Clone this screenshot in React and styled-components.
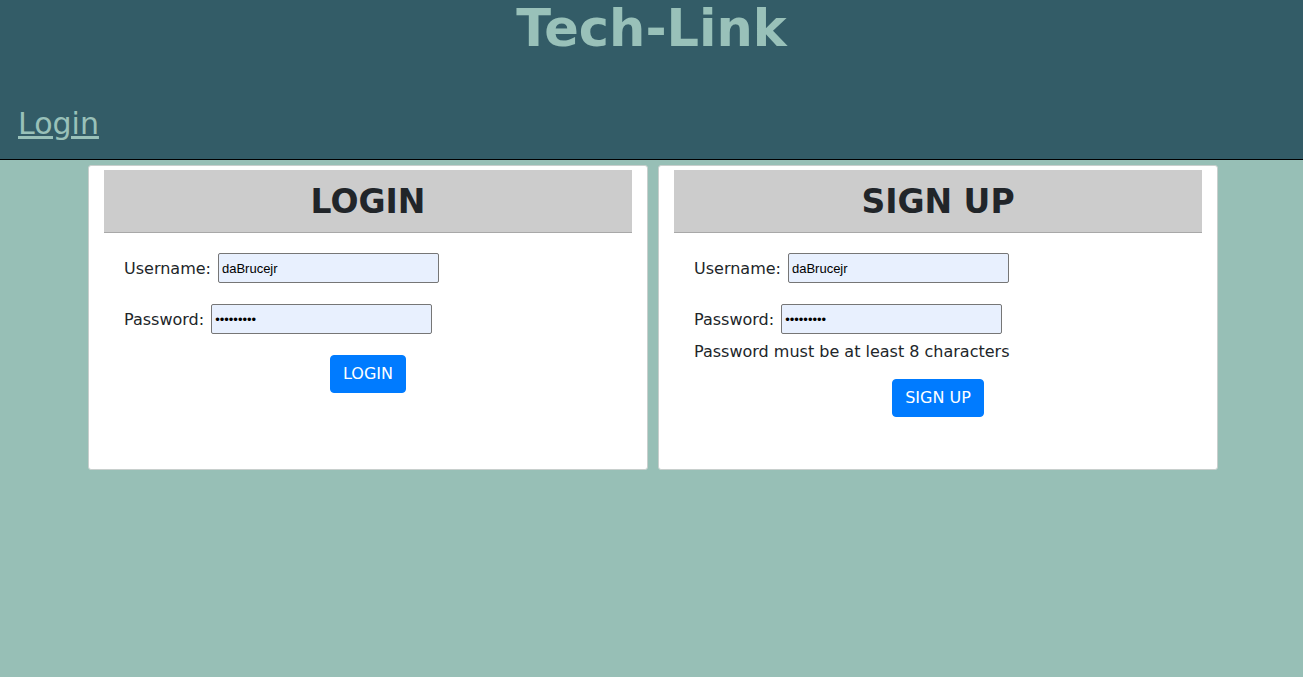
import React from 'react';
import styled, { createGlobalStyle } from 'styled-components';

const GlobalStyle = createGlobalStyle`
  html, body {
    margin: 0;
    padding: 0;
    background: #97bfb6;
    font-family: "DejaVu Sans", Verdana, sans-serif;
    color: #212529;
  }
  * {
    box-sizing: border-box;
  }
`;

export default function App() {
  return (
    <>
      <GlobalStyle />
      <Header>
        <SiteTitle>Tech-Link</SiteTitle>
        <Nav>
          <NavLink href="#">Login</NavLink>
        </Nav>
      </Header>

      <Main>
        <Card>
          <CardHeader>
            <CardTitle>LOGIN</CardTitle>
          </CardHeader>
          <Form>
            <Row>
              <Label>Username:</Label>
              <Input type="text" defaultValue="daBrucejr" />
            </Row>
            <Row>
              <Label>Password:</Label>
              <Input type="password" defaultValue="password1" />
            </Row>
            <ButtonRow $gap={21}>
              <Button type="button">LOGIN</Button>
            </ButtonRow>
          </Form>
        </Card>

        <Card>
          <CardHeader>
            <CardTitle>SIGN UP</CardTitle>
          </CardHeader>
          <Form>
            <Row>
              <Label>Username:</Label>
              <Input type="text" defaultValue="daBrucejr" />
            </Row>
            <Row>
              <Label>Password:</Label>
              <Input type="password" defaultValue="password1" />
            </Row>
            <Hint>Password must be at least 8 characters</Hint>
            <ButtonRow $gap={15}>
              <Button type="button">SIGN UP</Button>
            </ButtonRow>
          </Form>
        </Card>
      </Main>
    </>
  );
}

const Header = styled.header`
  height: 160px;
  background: #335c67;
  border-bottom: 1px solid #000;
  display: flex;
  flex-direction: column;
  padding-top: 1px;
`;

const SiteTitle = styled.h1`
  margin: 0;
  text-align: center;
  font-size: 51px;
  line-height: 56px;
  font-weight: bold;
  color: #99c1b9;
`;

const Nav = styled.nav`
  margin-top: 49px;
  padding-left: 18px;
`;

const NavLink = styled.a`
  font-size: 30px;
  line-height: 36px;
  color: #99c1b9;
  text-decoration: underline;
`;

const Main = styled.main`
  display: flex;
  justify-content: center;
  align-items: stretch;
  gap: 10px;
  margin-top: 5px;
  padding-left: 3px;
`;

const Card = styled.section`
  width: 560px;
  background: #fff;
  border: 1px solid #c8cfcd;
  border-radius: 3px;
  padding: 4px 15px 0;
`;

const CardHeader = styled.div`
  height: 63px;
  background: #cccccc;
  border-bottom: 1px solid #a8a8a8;
  display: flex;
  align-items: center;
  justify-content: center;
  padding-top: 2px;
`;

const CardTitle = styled.h2`
  margin: 0;
  font-size: 33px;
  font-weight: bold;
  line-height: 38px;
  color: #212529;
`;

const Form = styled.form`
  padding: 20px 20px 52px;
  display: flex;
  flex-direction: column;
`;

const Row = styled.div`
  display: flex;
  align-items: center;
  gap: 7px;
  height: 30px;
  & + & {
    margin-top: 21px;
  }
`;

const Label = styled.label`
  font-size: 16px;
  color: #212529;
`;

const Input = styled.input`
  width: 221px;
  height: 30px;
  border: 1px solid #767676;
  border-radius: 2px;
  background: #e8f0fe;
  padding: 1px 3px;
  font-family: "Liberation Sans", Arial, sans-serif;
  font-size: 13px;
  color: #000;
  outline: none;
`;

const Hint = styled.p`
  margin: 6px 0 0;
  font-size: 16px;
  line-height: 24px;
  color: #212529;
`;

const ButtonRow = styled.div`
  display: flex;
  justify-content: center;
  margin-top: ${({ $gap }) => $gap}px;
  margin-right: -20px;
  margin-left: -20px;
`;

const Button = styled.button`
  background: #007bff;
  color: #fff;
  border: 1px solid #007bff;
  border-radius: 4px;
  padding: 6px 12px;
  font-family: "DejaVu Sans", Verdana, sans-serif;
  font-size: 16px;
  line-height: 24px;
  cursor: pointer;
`;
